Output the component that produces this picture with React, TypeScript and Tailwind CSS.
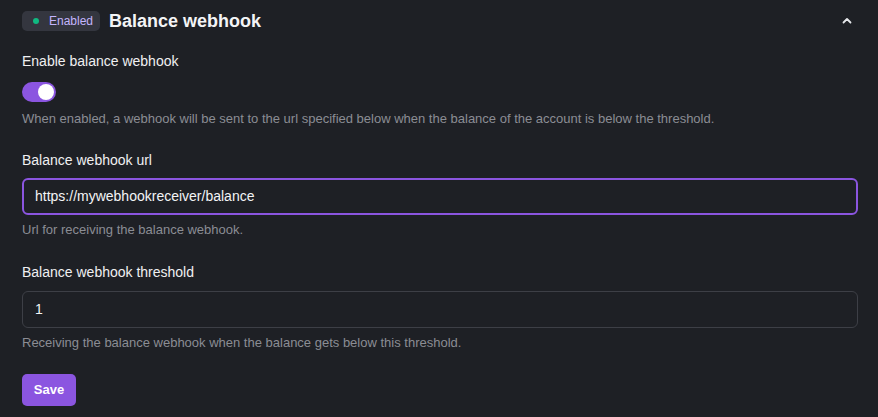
import React from "react";

export default function App() {
  return (
    <div className="w-[878px] h-[417px] bg-[#1e2025] text-[#e8e8ea] overflow-hidden" style={{ fontFamily: '"Liberation Sans", Arial, sans-serif' }}>
      <div className="px-[22px] pt-[11px]">
        <div className="flex items-center h-[20px]">
          <span className="flex items-center h-[20px] rounded-[5px] bg-[#34363f] pl-[11px] pr-[7px] text-[12px] text-[#c4b5fd]">
            <span className="w-[6px] h-[6px] rounded-full bg-[#10b981] mr-[10px]"></span>
            Enabled
          </span>
          <span className="ml-[9px] text-[18px] font-bold text-[#f3f4f6]">Balance webhook</span>
          <svg className="ml-auto mr-[3px]" width="12" height="12" viewBox="0 0 12 12" fill="none">
            <path d="M2.5 7.5 L6 4 L9.5 7.5" stroke="#e5e7eb" strokeWidth="1.8" strokeLinecap="round" strokeLinejoin="round" />
          </svg>
        </div>

        <div className="mt-[21px] text-[14px] leading-[18px] text-[#f0f0f2]">Enable balance webhook</div>
        <div className="mt-[12px] w-[34px] h-[20px] rounded-full bg-[#8b55e0] flex items-center justify-end pr-[2px]">
          <span className="w-[16px] h-[16px] rounded-full bg-white"></span>
        </div>
        <div className="mt-[9px] text-[13px] leading-[16px] text-[#8b8d94]">
          When enabled, a webhook will be sent to the url specified below when the balance of the account is below the threshold.
        </div>

        <div className="mt-[24px] text-[14px] leading-[18px] text-[#f0f0f2]">Balance webhook url</div>
        <div className="mt-[9px] h-[37px] w-[836px] rounded-[6px] border-2 border-[#8b55e0] flex items-center px-[11px] text-[14px] text-[#f3f4f6]">
          https://mywebhookreceiver/balance
        </div>
        <div className="mt-[7px] text-[13px] leading-[16px] text-[#8b8d94]">Url for receiving the balance webhook.</div>

        <div className="mt-[25px] text-[14px] leading-[18px] text-[#f0f0f2]">Balance webhook threshold</div>
        <div className="mt-[10px] h-[37px] w-[836px] rounded-[6px] border border-[#3d3f46] flex items-center px-[12px] text-[14px] text-[#f3f4f6]">
          1
        </div>
        <div className="mt-[7px] text-[13px] leading-[16px] text-[#8b8d94]">
          Receiving the balance webhook when the balance gets below this threshold.
        </div>

        <button className="mt-[23px] h-[32px] w-[54px] rounded-[5px] bg-[#8b55e0] text-white text-[13px] font-bold flex items-center justify-center">
          Save
        </button>
      </div>
    </div>
  );
}
